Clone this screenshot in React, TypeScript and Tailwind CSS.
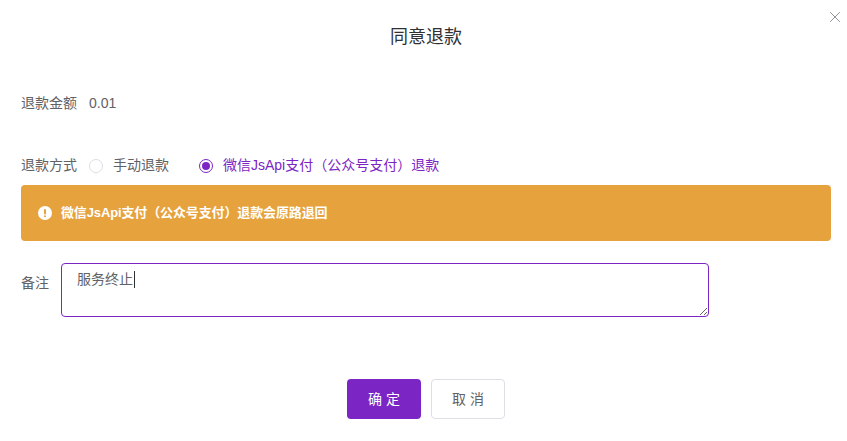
import { useEffect, useRef } from "react"

const font = "font-['Liberation_Sans','Noto_Sans_CJK_SC',sans-serif]"

export default function App() {
  const noteRef = useRef<HTMLTextAreaElement>(null)

  useEffect(() => {
    const el = noteRef.current
    if (el) {
      el.focus()
      el.setSelectionRange(el.value.length, el.value.length)
    }
  }, [])

  return (
    <div className={`relative h-[441px] w-[847px] overflow-hidden bg-white pl-[21px] pr-[16px] text-[14px] text-[#606266] ${font}`}>
      <button className="absolute right-[7px] top-[12px] text-[#909399]">
        <svg className="h-[10px] w-[10px]" viewBox="0 0 10 10" fill="none" stroke="currentColor" strokeWidth={1}>
          <path d="M0.2 0.2l9.6 9.6M9.8 0.2l-9.6 9.6" />
        </svg>
      </button>

      <h2 className="pt-[25px] text-center text-[18px] leading-[24px] text-[#303133]">同意退款</h2>

      <div className="mt-[32px]">
        <div className="flex h-[45px] items-center">
          <span className="w-[68px]">退款金额</span>
          <span>0.01</span>
        </div>

        <div className="mt-[17px] flex h-[45px] items-center">
          <span className="w-[68px]">退款方式</span>
          <label className="flex items-center">
            <span className="h-[14px] w-[14px] rounded-full border border-[#dcdfe6] bg-white" />
            <span className="ml-[10px]">手动退款</span>
          </label>
          <label className="ml-[30px] flex items-center text-[#7b26c4]">
            <span className="flex h-[14px] w-[14px] items-center justify-center rounded-full border border-[#7b26c4] bg-white">
              <span className="h-[8px] w-[8px] rounded-full bg-[#7b26c4]" />
            </span>
            <span className="ml-[10px]">微信JsApi支付（公众号支付）退款</span>
          </label>
        </div>

        <div className="mt-[-3px] flex h-[56px] items-center rounded-[4px] bg-[#e6a23c] pl-[17px] text-[13px] text-white">
          <svg className="h-[14px] w-[14px]" viewBox="0 0 14 14">
            <circle cx="7" cy="7" r="7" fill="#fff" />
            <rect x="6" y="3" width="2" height="5.5" rx="1" fill="#e6a23c" />
            <circle cx="7" cy="10.3" r="1" fill="#e6a23c" />
          </svg>
          <span className="ml-[9px] font-bold tracking-[-0.13px]">微信JsApi支付（公众号支付）退款会原路退回</span>
        </div>

        <div className="relative mt-[22px] flex">
          <label className="w-[40px] pt-[11px] leading-[18px]">备注</label>
          <textarea
            ref={noteRef}
            defaultValue="服务终止"
            className="block h-[54px] w-[648px] rounded-[4px] border border-[#7b26c4] px-[15px] py-[5px] text-[14px] leading-[21px] text-[#606266] caret-[#303133] outline-none"
          />
          <span className="absolute left-[113px] top-[8px] h-[17px] w-px bg-[#303133]" />
        </div>

        <div className="mt-[62px] flex justify-center gap-[10px]">
          <button className="h-[40px] w-[74px] rounded-[4px] bg-[#7b26c4] text-white">确 定</button>
          <button className="h-[40px] w-[74px] rounded-[4px] border border-[#dcdfe6] bg-white">取 消</button>
        </div>
      </div>
    </div>
  )
}
